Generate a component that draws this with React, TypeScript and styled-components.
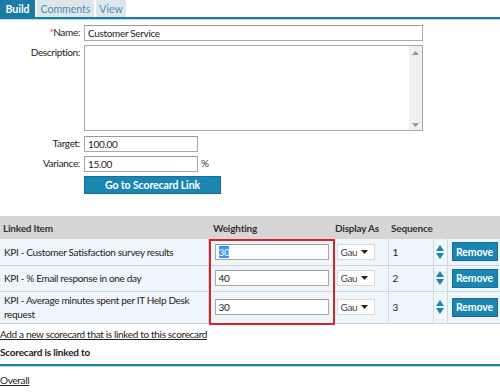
import React from "react";
import styled, { createGlobalStyle } from "styled-components";

const Global = createGlobalStyle`
  html, body { margin: 0; padding: 0; background: #fff; }
  body {
    font-family: Lato, "Noto Sans", sans-serif;
    font-size: 10px;
    letter-spacing: -0.33px;
    color: #222;
  }
  * { box-sizing: border-box; }
`;

const Page = styled.div`
  width: 500px;
  height: 392px;
  overflow: hidden;
`;

const TabBar = styled.div`
  display: flex;
  gap: 2px;
  height: 17px;
`;

const Tab = styled.div<{ $active?: boolean; $w: number }>`
  display: flex;
  align-items: center;
  justify-content: center;
  width: ${(p) => p.$w}px;
  background: ${(p) => (p.$active ? "#1a7ba7" : "#dde6ea")};
  color: ${(p) => (p.$active ? "#fff" : "#4d8fb0")};
  font-weight: ${(p) => (p.$active ? 700 : 400)};
  font-size: 10.5px;
  letter-spacing: 0;
`;

const TabLine = styled.div`
  height: 3px;
  border-top: 2px solid #1a7ba7;
  border-bottom: 1px solid #b3dbec;
`;

const Form = styled.div`
  display: grid;
  grid-template-columns: 80px 1fr;
  column-gap: 4px;
  row-gap: 4px;
  padding-top: 5px;
  align-items: start;
`;

const Label = styled.div`
  text-align: right;
  line-height: 15px;
  color: #222;
`;

const Star = styled.span`
  color: #d9232a;
  font-size: 9px;
`;

const TextInput = styled.div<{ $w: number }>`
  width: ${(p) => p.$w}px;
  height: 16px;
  border: 1px solid #a9a9a9;
  border-top-color: #999;
  padding: 0 3px;
  line-height: 14px;
  background: #fff;
  color: #222;
  white-space: nowrap;
  overflow: hidden;
`;

const TextArea = styled.div`
  width: 339px;
  height: 86px;
  border: 1px solid #a9a9a9;
  display: flex;
  justify-content: flex-end;
  margin-bottom: 1px;
`;

const ScrollBar = styled.div`
  width: 13px;
  background: #f0f0f0;
  display: flex;
  flex-direction: column;
  justify-content: space-between;
  align-items: center;
  padding: 5px 0 3px;
`;

const InlineRow = styled.div`
  display: flex;
  align-items: flex-start;
  gap: 3px;
`;

const Pct = styled.span`
  line-height: 14px;
  color: #333;
`;

const BlueButton = styled.div<{ $w: number; $h: number }>`
  display: flex;
  align-items: center;
  justify-content: center;
  width: ${(p) => p.$w}px;
  height: ${(p) => p.$h}px;
  background: #1c86b3;
  border: 1px solid #137099;
  color: #fff;
  font-weight: 700;
  font-size: 10.5px;
  letter-spacing: -0.1px;
  white-space: nowrap;
`;

const TableWrap = styled.div`
  position: relative;
  margin-top: 22px;
`;

const Table = styled.table`
  width: 500px;
  border-collapse: collapse;
  table-layout: fixed;
`;

const Th = styled.th<{ $w: number; $pl?: number }>`
  width: ${(p) => p.$w}px;
  background: #d6d6d6;
  height: 23px;
  text-align: left;
  font-weight: 700;
  padding: 0 0 0 ${(p) => p.$pl ?? 3}px;
  color: #333;
  white-space: nowrap;
  letter-spacing: -0.2px;
`;

const Tr = styled.tr`
  background: #eef6fb;
  border-bottom: 1px solid #cfd6db;
`;

const Td = styled.td<{ $h: number; $pl?: number }>`
  padding: 0 0 0 ${(p) => p.$pl ?? 4}px;
  height: ${(p) => p.$h}px;
  border-right: 1px solid #d2d9de;
  vertical-align: middle;
  line-height: 14px;
  color: #222;
  &:last-child { border-right: none; }
`;

const Select = styled.div`
  width: 38px;
  height: 16px;
  border: 1px solid #d8d8d8;
  background: #fff;
  display: flex;
  align-items: center;
  padding-left: 3px;
  gap: 4px;
  color: #444;
`;

const SelText = styled.span`
  width: 16px;
  overflow: hidden;
  white-space: nowrap;
`;

const Arrows = styled.div`
  display: flex;
  flex-direction: column;
  align-items: center;
  gap: 2px;
`;

const Highlight = styled.div`
  position: absolute;
  left: 209px;
  top: 23px;
  width: 126px;
  height: 86px;
  border: 2px solid #d9232a;
  pointer-events: none;
`;

const Link = styled.div<{ $mt: number }>`
  text-decoration: underline;
  color: #222;
  margin-top: ${(p) => p.$mt}px;
  line-height: 14px;
`;

const Heading = styled.div`
  font-weight: 700;
  margin-top: 4px;
  line-height: 14px;
  letter-spacing: -0.2px;
`;

const Rule = styled.div`
  margin-top: 5px;
  height: 3px;
  border-top: 2px solid #1d7ca3;
  border-bottom: 1px solid #b3dbec;
`;

const Selected = styled.span`
  background: #3399ff;
  color: #fff;
`;

const Caret = () => (
  <svg width="7" height="4" viewBox="0 0 7 4"><path d="M0 0h7L3.5 4z" fill="#222" /></svg>
);

const UpDown = () => (
  <Arrows>
    <svg width="8" height="6" viewBox="0 0 8 6"><path d="M4 0L8 6H0z" fill="#1c86b3" /></svg>
    <svg width="8" height="6" viewBox="0 0 8 6"><path d="M0 0h8L4 6z" fill="#1c86b3" /></svg>
  </Arrows>
);

const rows = [
  { name: "KPI - Customer Satisfaction survey results", w: "30", seq: "1", h: 26, sel: true },
  { name: "KPI - % Email response in one day", w: "40", seq: "2", h: 26 },
  { name: "KPI - Average minutes spent per IT Help Desk request", w: "30", seq: "3", h: 32 },
];

export default function App() {
  return (
    <Page>
      <Global />
      <TabBar>
        <Tab $active $w={35}>Build</Tab>
        <Tab $w={57}>Comments</Tab>
        <Tab $w={30}>View</Tab>
      </TabBar>
      <TabLine />
      <Form>
        <Label><Star>*</Star>Name:</Label>
        <TextInput $w={339}>Customer Service</TextInput>
        <Label>Description:</Label>
        <TextArea>
          <ScrollBar>
            <svg width="7" height="4" viewBox="0 0 7 4"><path d="M3.5 0L7 4H0z" fill="#999" /></svg>
            <svg width="7" height="4" viewBox="0 0 7 4"><path d="M0 0h7L3.5 4z" fill="#999" /></svg>
          </ScrollBar>
        </TextArea>
        <Label>Target:</Label>
        <TextInput $w={114}>100.00</TextInput>
        <Label>Variance:</Label>
        <InlineRow>
          <TextInput $w={114}>15.00</TextInput>
          <Pct>%</Pct>
        </InlineRow>
        <div />
        <BlueButton $w={137} $h={18}>Go to Scorecard Link</BlueButton>
      </Form>
      <TableWrap>
        <Table>
          <thead>
            <tr>
              <Th $w={208}>Linked Item</Th>
              <Th $w={125} $pl={5}>Weighting</Th>
              <Th $w={55} $pl={2}>Display As</Th>
              <Th $w={45} $pl={3}>Sequence</Th>
              <Th $w={14} />
              <Th $w={53} />
            </tr>
          </thead>
          <tbody>
            {rows.map((r) => (
              <Tr key={r.seq}>
                <Td $h={r.h}>{r.name}</Td>
                <Td $h={r.h} $pl={6}>
                  <TextInput $w={114}>{r.sel ? <Selected>{r.w}</Selected> : r.w}</TextInput>
                </Td>
                <Td $h={r.h} $pl={3}>
                  <Select><SelText>Gauge</SelText><Caret /></Select>
                </Td>
                <Td $h={r.h}>{r.seq}</Td>
                <Td $h={r.h} $pl={0}><UpDown /></Td>
                <Td $h={r.h} $pl={4}><BlueButton $w={46} $h={19}>Remove</BlueButton></Td>
              </Tr>
            ))}
          </tbody>
        </Table>
        <Highlight />
      </TableWrap>
      <Link $mt={3}>Add a new scorecard that is linked to this scorecard</Link>
      <Heading>Scorecard is linked to</Heading>
      <Rule />
      <Link $mt={6}>Overall</Link>
    </Page>
  );
}
